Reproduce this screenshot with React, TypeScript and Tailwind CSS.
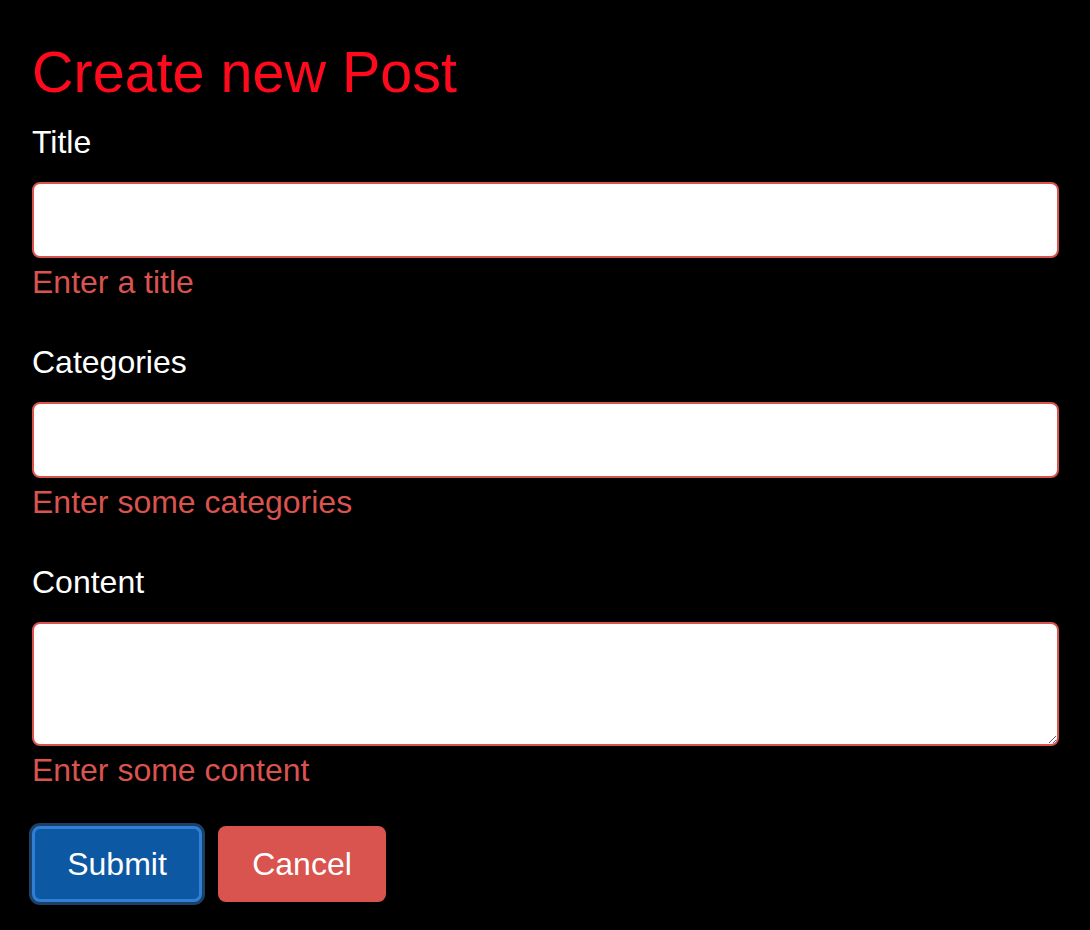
export default function App() {
  return (
    <div className="min-h-[930px] bg-black pl-8 pr-[31px] pt-[41px] font-['Liberation_Sans',Arial,sans-serif]">
      <h3 className="text-[57.5px] leading-[63px] text-[#ff0a1c]">Create new Post</h3>
      <form className="mt-[15px]">
        <div>
          <label className="block text-[32px] leading-[46px] text-white">Title</label>
          <input
            type="text"
            className="mt-[17px] block h-[76px] w-full rounded-lg border-2 border-[#d9534f] bg-white px-6 text-[32px] outline-none"
          />
          <p className="mt-px text-[32px] leading-[46px] text-[#d9534f]">Enter a title</p>
        </div>
        <div className="mt-[34px]">
          <label className="block text-[32px] leading-[46px] text-white">Categories</label>
          <input
            type="text"
            className="mt-[17px] block h-[76px] w-full rounded-lg border-2 border-[#d9534f] bg-white px-6 text-[32px] outline-none"
          />
          <p className="mt-px text-[32px] leading-[46px] text-[#d9534f]">Enter some categories</p>
        </div>
        <div className="mt-[34px]">
          <label className="block text-[32px] leading-[46px] text-white">Content</label>
          <textarea
            rows={3}
            className="mt-[17px] block h-[124px] w-full resize-y rounded-lg border-2 border-[#d9534f] bg-white px-6 py-3 text-[32px] outline-none"
          />
          <p className="mt-px text-[32px] leading-[46px] text-[#d9534f]">Enter some content</p>
        </div>
        <div className="mt-[33px] flex gap-4">
          <button
            type="submit"
            className="h-[76px] w-[170px] rounded-lg border-[3px] border-[#2f7fd4] bg-[#0c58a3] text-[32px] text-white shadow-[0_0_0_3px_#1d3f68]"
          >
            Submit
          </button>
          <button
            type="button"
            className="h-[76px] w-[168px] rounded-lg bg-[#d9534f] text-[32px] text-white"
          >
            Cancel
          </button>
        </div>
      </form>
    </div>
  );
}
